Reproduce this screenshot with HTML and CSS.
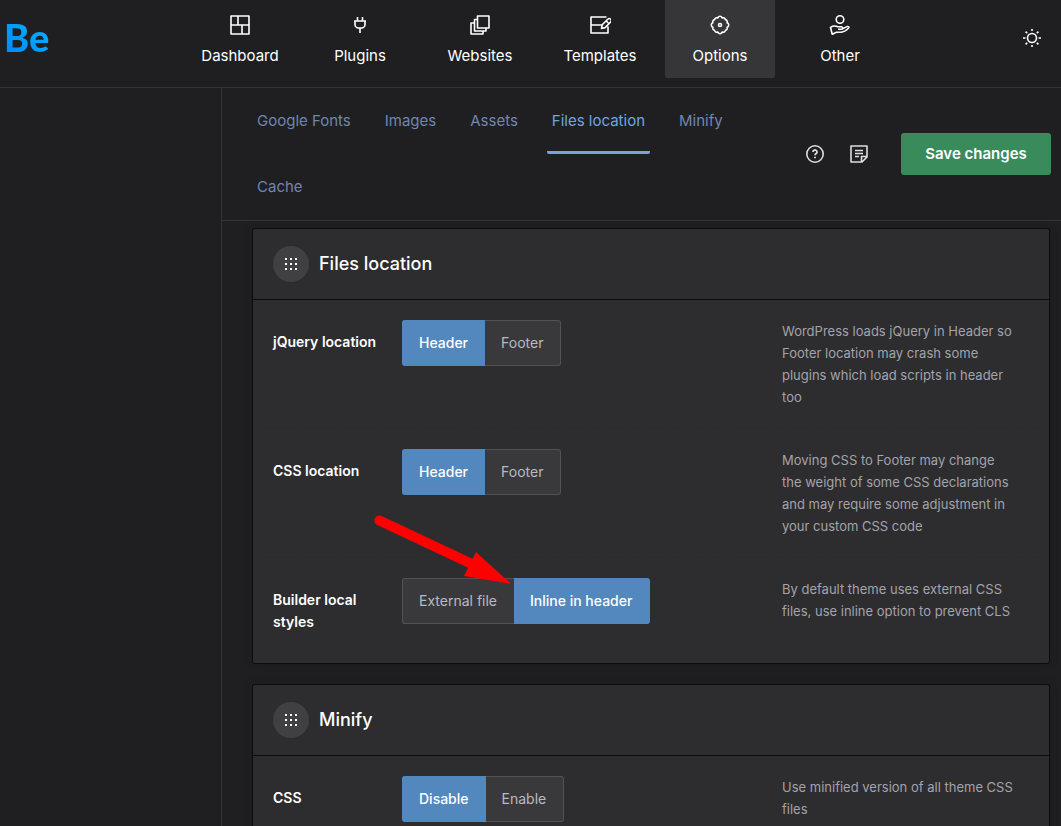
FILE: index.html
```html
<!DOCTYPE html>
<html lang="en">
<head>
<meta charset="utf-8">
<meta name="viewport" content="width=device-width, initial-scale=1">
<title>Be - Files location</title>
<link rel="stylesheet" href="styles.css">
</head>
<body>
<header class="topbar">
  <a class="logo" href="#">Be</a>
  <nav class="nav" aria-label="Main">
    <a class="nav-item" href="#">
      <svg class="icon" viewBox="0 0 22 22"><path d="M2 2h18v18H2zM2 11h18M9 2v9M13 11v9"/></svg>
      Dashboard
    </a>
    <a class="nav-item" href="#">
      <svg class="icon" viewBox="0 0 22 22"><path d="M8.500 3v4M13.500 3v4M5 7h12M6 7v3.500a3.500 3.500 0 0 0 3.500 3.500h3a3.500 3.500 0 0 0 3.500-3.500V7M11 14v5"/></svg>
      Plugins
    </a>
    <a class="nav-item" href="#">
      <svg class="icon" viewBox="0 0 22 22"><path d="M8.500 2H20v12H8.500zM8.500 5.500H5.500V17H17v-3M5.500 9H2v11h12v-3"/></svg>
      Websites
    </a>
    <a class="nav-item" href="#">
      <svg class="icon" viewBox="0 0 22 22"><path d="M17.500 3H2v16h17v-6.500M2 11h10.500M12.500 14.500l.7-3.700 5.600-5.600a1.700 1.700 0 0 1 2.800 2.800l-5.500 5.600zM17 6.800l2.700 2.700"/></svg>
      Templates
    </a>
    <a class="nav-item is-active" href="#" aria-current="page">
      <svg class="icon" viewBox="0 0 22 22"><path d="M8.700 4.200C9 1.400 13 1.400 13.300 4.200c2.200-1.800 5 1 3.200 3.200 3 .4 3 6.800 0 7.200 1.800 2.200-1 5-3.200 3.200-.3 2.800-4.300 2.800-4.600 0-2.200 1.800-5-1-3.200-3.200" stroke="none"/><path d="M8.800 3.900a2.300 2.300 0 0 1 4.400 0 2.300 2.300 0 0 1 3.200 1.700 2.300 2.300 0 0 1 1.700 3.200 2.300 2.300 0 0 1 0 4.400 2.300 2.300 0 0 1-1.700 3.200 2.300 2.300 0 0 1-3.200 1.700 2.300 2.300 0 0 1-4.400 0 2.300 2.300 0 0 1-3.200-1.700 2.300 2.300 0 0 1-1.700-3.200 2.300 2.300 0 0 1 0-4.400 2.300 2.300 0 0 1 1.700-3.200 2.300 2.300 0 0 1 3.200-1.700z"/><circle cx="11" cy="11" r="1.500"/></svg>
      Options
    </a>
    <a class="nav-item" href="#">
      <svg class="icon" viewBox="0 0 22 22"><circle cx="11" cy="5.500" r="3.800"/><path d="M1.500 13.300c2.300-1.500 4.900-1.600 7.300-.5h3.700q1.500.4 1 2l4.600-2.200c1.400-.5 2.400.6 1.400 1.700-2.100 2.300-5 3.900-8.500 3.900H7.500l-4.300 2zM9 15.300h3.500q1 0 1-.5"/></svg>
      Other
    </a>
  </nav>
  <button class="icon-button theme-toggle" type="button" aria-label="Toggle theme">
    <svg class="icon" viewBox="0 0 22 22"><circle cx="11" cy="11" r="4.500"/><path d="M11 2v2M11 18v2M2 11h2.500M17.500 11H20M4.600 4.600l1.600 1.600M15.800 15.800l1.600 1.600M4.600 17.400l1.600-1.600M15.800 6.200l1.600-1.600"/></svg>
  </button>
</header>

<div class="layout">
  <aside class="sidebar"></aside>
  <main class="main">
    <div class="toolbar">
      <nav class="tabs" aria-label="Sections">
        <a class="tab" href="#">Google Fonts</a>
        <a class="tab" href="#">Images</a>
        <a class="tab" href="#">Assets</a>
        <a class="tab is-active" href="#" aria-current="page">Files location</a>
        <a class="tab" href="#">Minify</a>
        <a class="tab" href="#">Cache</a>
      </nav>
      <div class="actions">
        <button class="icon-button" type="button" aria-label="Help">
          <svg class="icon" viewBox="0 0 22 22"><circle cx="11" cy="11" r="8.200"/><path stroke-width="1.800" d="M9 9a2 2 0 1 1 3.200 1.600c-.8.500-1.200.8-1.200 1.700M11 13.700v1.600"/></svg>
        </button>
        <button class="icon-button" type="button" aria-label="Notes">
          <svg class="icon" viewBox="0 0 22 22"><path d="M3 3h16v11l-5 5H3zM19 13.500h-5.500V19M7 7.500h8M7 10.500h8M7 13.500h4"/></svg>
        </button>
        <button class="save" type="button">Save changes</button>
      </div>
    </div>

    <div class="cards">
      <section class="card">
        <header class="card-head">
          <span class="grip"><svg class="dots" viewBox="0 0 12 12"><path d="M0 0h2v2H0zM5 0h2v2H5zM10 0h2v2h-2zM0 5h2v2H0zM5 5h2v2H5zM10 5h2v2h-2zM0 10h2v2H0zM5 10h2v2H5zM10 10h2v2h-2z"/></svg></span>
          <h2 class="card-title">Files location</h2>
        </header>
        <div class="row">
          <h3 class="row-label" id="jquery-label">jQuery location</h3>
          <div class="control">
            <div class="segments" role="radiogroup" aria-labelledby="jquery-label">
              <input class="segment-input" type="radio" name="jquery" id="jquery-header" checked><label class="segment" for="jquery-header">Header</label>
              <input class="segment-input" type="radio" name="jquery" id="jquery-footer"><label class="segment" for="jquery-footer">Footer</label>
            </div>
          </div>
          <p class="row-text">WordPress loads jQuery in Header so Footer location may crash some plugins which load scripts in header too</p>
        </div>
        <div class="row">
          <h3 class="row-label" id="css-label">CSS location</h3>
          <div class="control">
            <div class="segments" role="radiogroup" aria-labelledby="css-label">
              <input class="segment-input" type="radio" name="css" id="css-header" checked><label class="segment" for="css-header">Header</label>
              <input class="segment-input" type="radio" name="css" id="css-footer"><label class="segment" for="css-footer">Footer</label>
            </div>
          </div>
          <p class="row-text">Moving CSS to Footer may change the weight of some CSS declarations and may require some adjustment in your custom CSS code</p>
        </div>
        <div class="row">
          <h3 class="row-label" id="local-label">Builder local styles</h3>
          <div class="control">
            <div class="segments" role="radiogroup" aria-labelledby="local-label">
              <input class="segment-input" type="radio" name="local" id="local-external"><label class="segment" for="local-external">External file</label>
              <input class="segment-input" type="radio" name="local" id="local-inline" checked><label class="segment" for="local-inline">Inline in header</label>
            </div>
            <svg class="arrow" viewBox="0 0 142 72"><path class="arrow-line" d="M7.500 6.500 102 51"/><path class="arrow-head" d="M104 38 92 62l47 8z"/></svg>
          </div>
          <p class="row-text">By default theme uses external CSS files, use inline option to prevent CLS</p>
        </div>
      </section>

      <section class="card">
        <header class="card-head">
          <span class="grip"><svg class="dots" viewBox="0 0 12 12"><path d="M0 0h2v2H0zM5 0h2v2H5zM10 0h2v2h-2zM0 5h2v2H0zM5 5h2v2H5zM10 5h2v2h-2zM0 10h2v2H0zM5 10h2v2H5zM10 10h2v2h-2z"/></svg></span>
          <h2 class="card-title">Minify</h2>
        </header>
        <div class="row">
          <h3 class="row-label" id="minify-label">CSS</h3>
          <div class="control">
            <div class="segments" role="radiogroup" aria-labelledby="minify-label">
              <input class="segment-input" type="radio" name="minify" id="minify-off" checked><label class="segment" for="minify-off">Disable</label>
              <input class="segment-input" type="radio" name="minify" id="minify-on"><label class="segment" for="minify-on">Enable</label>
            </div>
          </div>
          <p class="row-text">Use minified version of all theme CSS files</p>
        </div>
      </section>
    </div>
  </main>
</div>
</body>
</html>
```
FILE: styles.css
```css
* { box-sizing: border-box; }

html { background: #1f1f21; }

body {
  margin: 0;
  height: 100vh;
  overflow: hidden;
  display: flex;
  flex-direction: column;
  background: #1f1f21;
  color: #fff;
  font-family: Inter, "Open Sans", sans-serif;
  font-size: 14px;
  line-height: 22px;
}

a { color: inherit; text-decoration: none; }

h2, h3, p { margin: 0; }

.icon {
  display: block;
  width: 22px;
  height: 22px;
  fill: none;
  stroke: #fff;
  stroke-width: 1.6;
  stroke-linejoin: round;
}

.topbar {
  flex: none;
  display: flex;
  align-items: flex-start;
  padding-right: 18px;
  border-bottom: 1px solid #343436;
}

.logo {
  flex: none;
  width: 185px;
  padding: 13px 0 0 4px;
  font-family: Lato, sans-serif;
  font-size: 38px;
  font-weight: 900;
  line-height: 48px;
  color: transparent;
  background: linear-gradient(40deg, #0080ff, #00b0ff 55px);
  background-clip: text;
  -webkit-background-clip: text;
}

.nav {
  display: flex;
  gap: 0 10px;
  padding-bottom: 9px;
}

.nav-item {
  display: flex;
  flex-direction: column;
  align-items: center;
  gap: 9px;
  width: 110px;
  height: 78px;
  padding-top: 14px;
  border-radius: 0 0 3px 3px;
  font-size: 15px;
}

.nav-item.is-active { background: #363638; }

.icon-button {
  padding: 0;
  border: 0;
  background: none;
  cursor: pointer;
}

.theme-toggle { margin: 27px 0 0 auto; }

.layout {
  flex: 1;
  min-height: 0;
  display: flex;
}

.sidebar {
  flex: none;
  width: 222px;
  border-right: 1px solid #343436;
}

.main {
  flex: 1;
  min-width: 0;
  overflow-y: auto;
  scrollbar-width: none;
}

.toolbar {
  display: flex;
  align-items: center;
  justify-content: space-between;
  gap: 30px;
  padding: 0 10px 0 30px;
  border-bottom: 1px solid #343436;
}

.tabs {
  flex: 1;
  display: flex;
  flex-wrap: wrap;
  gap: 0 24px;
}

.tab {
  height: 66px;
  padding: 22px 5px 0;
  color: #6f86b0;
  font-size: 15px;
}

.tab.is-active {
  color: #6fa5e0;
  border-bottom: 3px solid #76a5dc;
  border-radius: 2px;
}

.actions {
  flex: none;
  display: flex;
  align-items: center;
  gap: 22px;
}

.actions .icon { stroke: #ddd; }

.save {
  min-width: 150px;
  height: 42px;
  margin-left: 9px;
  padding: 0 20px;
  border: 0;
  border-radius: 3px;
  background: #3a8b5c;
  color: #fff;
  font: 600 15px/22px Inter, "Open Sans", sans-serif;
  cursor: pointer;
}

.cards {
  display: flex;
  flex-direction: column;
  gap: 20px;
  padding: 7px 11px 20px 30px;
}

.card {
  border: 1px solid #0c0c0d;
  border-radius: 3px;
  background: #2d2d2f;
  box-shadow: 0 0 8px rgba(0, 0, 0, 0.15);
}

.card-head {
  display: flex;
  align-items: center;
  gap: 10px;
  padding: 17px 20px;
  border-bottom: 1px solid #0c0c0d;
}

.card-title {
  font-size: 18px;
  font-weight: 500;
}

.grip {
  display: grid;
  place-items: center;
  width: 36px;
  height: 36px;
  border-radius: 50%;
  background: #404042;
}

.dots { width: 12px; height: 12px; fill: #fff; }

.row {
  display: grid;
  grid-template-columns: 109px 1fr 247px;
  gap: 20px;
  min-height: 106px;
  padding: 20px;
}

.row + .row { border-top: 1px dashed #2b2b2d; }

.row-label {
  padding-top: 11px;
  font-size: 14px;
  font-weight: 600;
}

.row-text {
  padding-right: 14px;
  font-size: 13px;
  color: #a3a3ab;
}

.control { position: relative; }

.segments {
  display: inline-flex;
  position: relative;
}

.segment-input {
  position: absolute;
  opacity: 0;
  pointer-events: none;
}

.segment {
  height: 46px;
  padding: 11px 17px 11px 16px;
  border: 1px solid #525254;
  background: #39393b;
  color: #b9b9c2;
  cursor: pointer;
}

.segment:first-of-type { border-radius: 3px 0 0 3px; }

.segment:last-of-type { border-left: 0; border-radius: 0 3px 3px 0; }

.segment:not(:last-of-type) { border-right: 0; }

.segment-input:checked + .segment {
  border-color: #5288bd;
  background: #5288bd;
  color: #fff;
  font-weight: 500;
}

.arrow {
  position: absolute;
  left: -30px;
  top: -64px;
  width: 142px;
  height: 72px;
}

.arrow-line {
  fill: none;
  stroke: #f00;
  stroke-width: 10;
  stroke-linecap: round;
}

.arrow-head { fill: #f00; }
```
